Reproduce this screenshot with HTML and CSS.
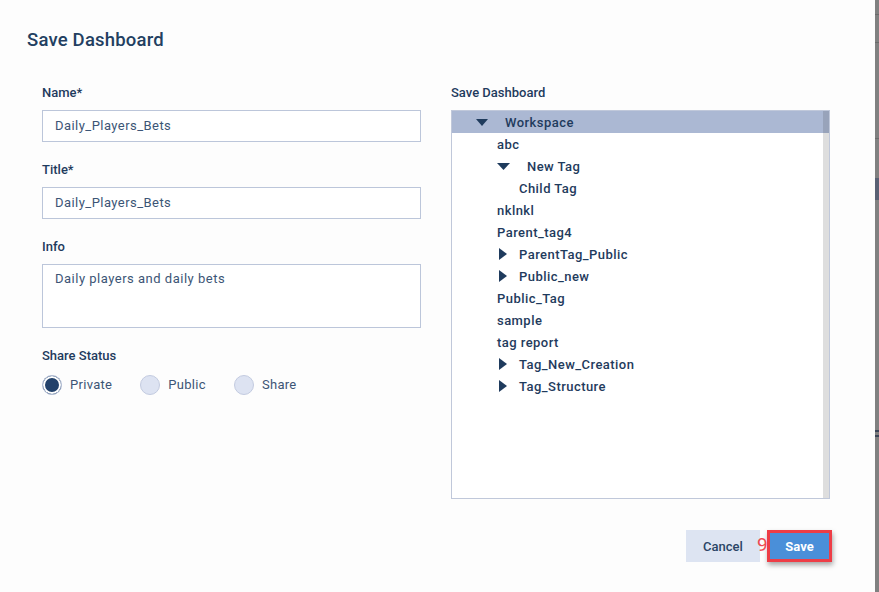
FILE: index.html
```html
<!DOCTYPE html>
<html lang="en">
<head>
<meta charset="utf-8">
<title>Save Dashboard</title>
<link rel="stylesheet" href="styles.css">
</head>
<body>
<div class="page">
  <div class="dialog">
    <h1 class="dialog-title">Save Dashboard</h1>
    <div class="dialog-body">
      <div class="col form-col">
        <label class="field-label">Name*</label>
        <div class="input">Daily_Players_Bets</div>
        <label class="field-label">Title*</label>
        <div class="input">Daily_Players_Bets</div>
        <label class="field-label">Info</label>
        <div class="input textarea">Daily players and daily bets</div>
        <label class="field-label">Share Status</label>
        <div class="radios">
          <div class="radio-opt"><span class="radio checked"></span><span class="radio-text">Private</span></div>
          <div class="radio-opt"><span class="radio"></span><span class="radio-text">Public</span></div>
          <div class="radio-opt"><span class="radio"></span><span class="radio-text">Share</span></div>
        </div>
      </div>
      <div class="col tree-col">
        <label class="field-label">Save Dashboard</label>
        <div class="tree">
          <div class="tree-list">
            <div class="row selected lvl0"><span class="tog down"><svg width="12" height="7" viewBox="0 0 12 7"><path d="M0 0H12L6 7Z"/></svg></span><span class="name">Workspace</span></div>
            <div class="row lvl1"><span class="name">abc</span></div>
            <div class="row lvl1"><span class="tog down"><svg width="13" height="7" viewBox="0 0 13 7"><path d="M0 0H13L6.5 7Z"/></svg></span><span class="name">New Tag</span></div>
            <div class="row lvl2"><span class="name">Child Tag</span></div>
            <div class="row lvl1"><span class="name">nklnkl</span></div>
            <div class="row lvl1"><span class="name">Parent_tag4</span></div>
            <div class="row lvl1"><span class="tog right"><svg width="8" height="12" viewBox="0 0 8 12"><path d="M0 0L8 6L0 12Z"/></svg></span><span class="name">ParentTag_Public</span></div>
            <div class="row lvl1"><span class="tog right"><svg width="8" height="12" viewBox="0 0 8 12"><path d="M0 0L8 6L0 12Z"/></svg></span><span class="name">Public_new</span></div>
            <div class="row lvl1"><span class="name">Public_Tag</span></div>
            <div class="row lvl1"><span class="name">sample</span></div>
            <div class="row lvl1"><span class="name">tag report</span></div>
            <div class="row lvl1"><span class="tog right"><svg width="8" height="12" viewBox="0 0 8 12"><path d="M0 0L8 6L0 12Z"/></svg></span><span class="name">Tag_New_Creation</span></div>
            <div class="row lvl1"><span class="tog right"><svg width="8" height="12" viewBox="0 0 8 12"><path d="M0 0L8 6L0 12Z"/></svg></span><span class="name">Tag_Structure</span></div>
          </div>
          <div class="scrollbar"><div class="thumb"></div></div>
        </div>
        <div class="actions">
          <button class="btn cancel">Cancel</button>
          <button class="btn save"><span class="marker">9</span>Save</button>
        </div>
      </div>
    </div>
  </div>
  <div class="backdrop"></div>
</div>
</body>
</html>
```

FILE: styles.css
```css
* { box-sizing: border-box; }
html, body { margin: 0; padding: 0; }
body {
  font-family: Roboto, "Noto Sans", Arial, sans-serif;
  background: #808080;
  width: 879px;
  height: 592px;
  overflow: hidden;
}
.page {
  display: flex;
  width: 879px;
  height: 592px;
}
.dialog {
  width: 875px;
  height: 592px;
  background: #fdfdfd;
  padding: 29px 0 0 0;
}
.backdrop {
  width: 4px;
  height: 592px;
  background:
    linear-gradient(to bottom,
      #808080 0, #808080 14px, #6b6b6b 14px, #6b6b6b 15px,
      #808080 15px, #808080 42px, #6b6b6b 42px, #6b6b6b 43px,
      #808080 43px, #808080 138px, #6b6b6b 138px, #6b6b6b 139px,
      #808080 139px, #808080 178px, #596174 178px, #596174 200px,
      #808080 200px, #808080 430px, #3c4658 430px, #3c4658 432px,
      #808080 432px, #808080 435px, #3c4658 435px, #3c4658 437px,
      #808080 437px);
}
.dialog-title {
  margin: 0 0 0 27px;
  font-size: 18.5px;
  line-height: 22px;
  font-weight: 500;
  letter-spacing: 0.2px;
  color: #233f61;
}
.dialog-body {
  display: flex;
  gap: 30px;
  padding: 33px 0 0 42px;
}
.col {
  width: 379px;
  display: flex;
  flex-direction: column;
}
.field-label {
  display: block;
  font-size: 13px;
  line-height: 18px;
  font-weight: 500;
  color: #1f3b5d;
  margin-bottom: 8px;
}
.input {
  height: 32px;
  border: 1px solid #bcc6da;
  background: #fff;
  padding: 0 12px;
  font-size: 13px;
  line-height: 30px;
  letter-spacing: 0.45px;
  color: #3c5576;
  margin-bottom: 19px;
}
.input.textarea {
  height: 64px;
  line-height: 16px;
  padding-top: 6px;
  letter-spacing: 0.5px;
}
.radios {
  display: flex;
  gap: 28px;
  margin-top: 2px;
}
.radio-opt {
  display: flex;
  align-items: center;
  gap: 8px;
}
.radio {
  width: 20px;
  height: 20px;
  border-radius: 50%;
  background: #dde3f2;
  border: 1px solid #c3cbe0;
}
.radio.checked {
  background: #22416a;
  border: 1px solid #b6c1d8;
  box-shadow: inset 0 0 0 2px #fff;
}
.radio-text {
  font-size: 13px;
  line-height: 16px;
  letter-spacing: 0.3px;
  color: #3c5576;
}
.tree {
  height: 389px;
  border: 1px solid #c0c8da;
  background: #fff;
  display: flex;
}
.tree-list {
  flex: 1;
}
.scrollbar {
  width: 6px;
  background: #dedede;
}
.thumb {
  height: 22px;
  background: #98a3ba;
}
.row {
  display: flex;
  align-items: center;
  height: 22px;
  font-size: 13px;
  font-weight: 500;
  letter-spacing: 0.45px;
  color: #1f3b5d;
}
.row.selected {
  background: #abb8d3;
}
.row.lvl0 { padding-left: 24px; }
.row.lvl1 { padding-left: 45px; }
.row.lvl2 { padding-left: 67px; }
.tog {
  display: flex;
  align-items: center;
  fill: #1f3b5d;
}
.tog.down { width: 29px; }
.row.lvl1 .tog.down { width: 30px; }
.tog.right { width: 22px; padding-left: 2px; }
.actions {
  display: flex;
  justify-content: flex-end;
  gap: 7px;
  margin-top: 31px;
  margin-right: -2px;
}
.btn {
  height: 32px;
  border: 0;
  font-family: Roboto, "Noto Sans", Arial, sans-serif;
  font-size: 13px;
  font-weight: 700;
  cursor: pointer;
  padding: 0;
}
.btn.cancel {
  width: 74px;
  background: #dde4f2;
  color: #2a4466;
  font-weight: 500;
}
.btn.save {
  position: relative;
  width: 65px;
  background: #4a8fd9;
  color: #fff;
  border: 3px solid #ee3d46;
  box-shadow: 1px 3px 5px rgba(0,0,0,0.35);
}
.marker {
  position: absolute;
  left: -13px;
  top: 0;
  font-size: 19px;
  font-weight: 400;
  color: #f04a52;
}
```
